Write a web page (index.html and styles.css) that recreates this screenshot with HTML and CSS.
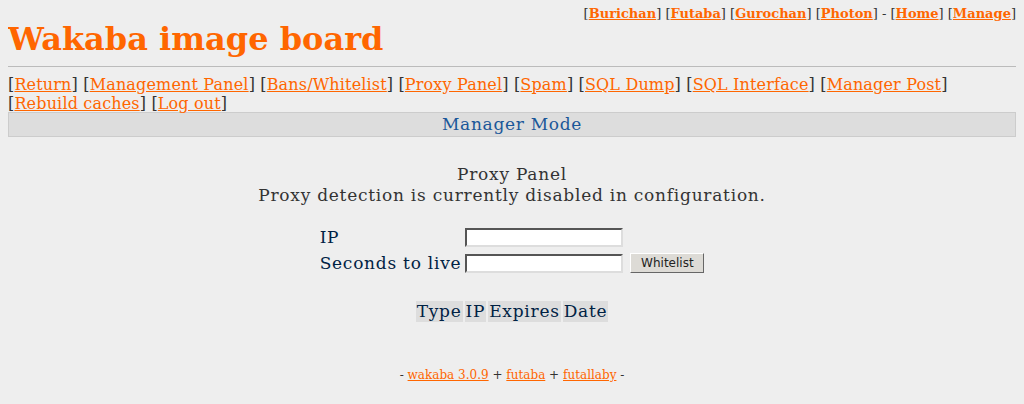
FILE: index.html
```html
<!DOCTYPE html>
<html>
<head>
<meta charset="utf-8">
<title>Wakaba image board</title>
<link rel="stylesheet" href="styles.css">
</head>
<body>
<div class="adminbar">[<a href="#">Burichan</a>] [<a href="#">Futaba</a>] [<a href="#">Gurochan</a>] [<a href="#">Photon</a>] - [<a href="#">Home</a>] [<a href="#">Manage</a>]</div>
<div class="logo">Wakaba image board</div>
<hr class="rule">
<div class="nav">[<a href="#">Return</a>] [<a href="#">Management Panel</a>] [<a href="#">Bans/Whitelist</a>] [<a href="#">Proxy Panel</a>] [<a href="#">Spam</a>] [<a href="#">SQL Dump</a>] [<a href="#">SQL Interface</a>] [<a href="#">Manager Post</a>] <span class="nw">[<a href="#">Rebuild caches</a>]</span> <span class="nw">[<a href="#">Log out</a>]</span></div>
<div class="managehead">Manager Mode</div>
<div class="panel">
  <div class="ptitle">Proxy Panel</div>
  <div class="pnote">Proxy detection is currently disabled in configuration.</div>
  <table class="form">
    <tr><td class="lbl">IP</td><td class="cell"><input class="field" type="text"></td><td></td></tr>
    <tr><td class="lbl">Seconds to live</td><td class="cell"><input class="field" type="text"></td><td class="cell"><button class="btn">Whitelist</button></td></tr>
  </table>
  <table class="list">
    <tr><td class="head">Type</td><td class="head">IP</td><td class="head">Expires</td><td class="head">Date</td></tr>
  </table>
</div>
<div class="footer">- <a href="#">wakaba 3.0.9</a> + <a href="#">futaba</a> + <a href="#">futallaby</a> -</div>
</body>
</html>
```

FILE: styles.css
```css
html, body {
  background: #eeeeee;
  color: #333333;
}
body {
  margin: 6px 8px 8px 8px;
  font-family: "DejaVu Serif", serif;
  font-size: 16px;
}
a {
  color: #ff6600;
}
.adminbar {
  text-align: right;
  font-size: 13px;
  line-height: 15px;
}
.adminbar a {
  font-weight: bold;
}
.logo {
  color: #ff6600;
  font-size: 32px;
  font-weight: bold;
  line-height: 34px;
  margin-top: 1px;
}
.rule {
  border: 0;
  border-top: 1px solid #bbbbbb;
  height: 0;
  margin: 10px 0 8px 0;
}
.nav {
  line-height: 19px;
  letter-spacing: 0.16px;
}
.nw {
  white-space: nowrap;
}
.managehead {
  margin-top: -1px;
  background: #dddddd;
  border: 1px solid #cccccc;
  color: #1a5799;
  text-align: center;
  font-size: 17px;
  letter-spacing: 0.7px;
  line-height: 23px;
}
.panel {
  margin-top: 27px;
  text-align: center;
  font-size: 17px;
  letter-spacing: 0.75px;
}
.ptitle, .pnote {
  line-height: 21px;
}
.form {
  margin: 17px auto 0 auto;
  border-collapse: separate;
  border-spacing: 2px;
}
.form td {
  padding: 2px 1px;
  text-align: left;
  white-space: nowrap;
}
.lbl {
  color: #002244;
}
.field {
  display: block;
  box-sizing: border-box;
  width: 158px;
  height: 19px;
  margin: 0;
  border: 2px solid;
  border-color: #555555 #dddddd #dddddd #555555;
  background: #ffffff;
  padding: 1px 2px;
}
.btn {
  display: block;
  box-sizing: border-box;
  font-family: "DejaVu Sans", sans-serif;
  font-size: 12px;
  letter-spacing: 0;
  height: 20px;
  width: 74px;
  padding: 0;
  margin-left: 3px;
  background: #dddbd6;
  border: 1px solid;
  border-color: #ffffff #666666 #666666 #ffffff;
  color: #222222;
}
.list {
  margin: 22px auto 0 auto;
  border-spacing: 2px;
}
.head {
  background: #dddddd;
  color: #002244;
  padding: 1px;
  line-height: 19px;
}
.footer {
  margin-top: 44px;
  text-align: center;
  font-size: 12px;
}
```
